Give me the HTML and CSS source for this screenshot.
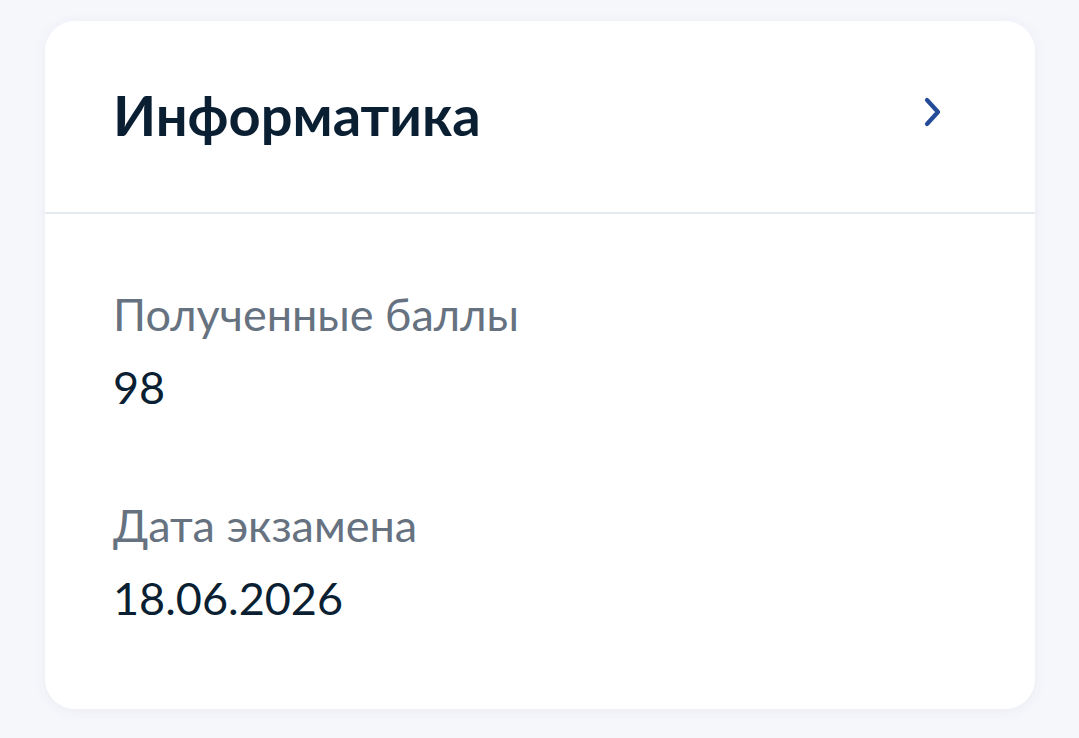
FILE: index.html
```html
<!DOCTYPE html>
<html lang="ru">
<head>
    <meta charset="UTF-8">
    <meta name="viewport" content="width=device-width, initial-scale=1.0">
    <title>Результаты экзаменов</title>
    <link rel="stylesheet" href="styles.css">
</head>
<body>
    <div class="exam-card">
        <a class="exam-header" href="#">
            <h2 class="exam-title">Информатика</h2>
            <svg class="chevron" width="20" height="30" viewBox="0 0 20 30" aria-hidden="true">
                <path d="M4 3 L15 15 L4 27" fill="none" stroke="currentColor" stroke-width="4.2" stroke-linecap="round" stroke-linejoin="round"/>
            </svg>
        </a>

        <div class="exam-body">
            <div class="field">
                <div class="field-label">Полученные баллы</div>
                <div class="field-value">98</div>
            </div>
            <div class="field">
                <div class="field-label">Дата экзамена</div>
                <div class="field-value">18.06.2026</div>
            </div>
        </div>
    </div>
</body>
</html>
```

FILE: styles.css
```css
* {
    margin: 0;
    padding: 0;
    box-sizing: border-box;
}

body {
    font-family: Lato, 'Noto Sans', sans-serif;
    background: #f6f7fb;
    min-height: 100vh;
    padding: 21px 44px 29px 45px;
    color: #0b1f33;
}

.exam-card {
    background: #ffffff;
    border-radius: 30px;
    box-shadow: 0 2px 14px rgba(40, 60, 130, 0.06);
    overflow: hidden;
}

.exam-header {
    display: flex;
    align-items: center;
    justify-content: space-between;
    height: 193px;
    padding: 0 92px 0 68px;
    border-bottom: 2px solid #e3ebf0;
    color: inherit;
    text-decoration: none;
}

.exam-title {
    font-size: 56px;
    font-weight: 700;
    margin-top: -4px;
}

.chevron {
    color: #234b97;
    margin-top: -10px;
}

.exam-body {
    padding: 73px 70px 84px 68px;
    display: flex;
    flex-direction: column;
    gap: 84px;
}

.field-label {
    font-size: 45px;
    line-height: 54px;
    color: #66727f;
}

.field-value {
    font-size: 45px;
    line-height: 54px;
    margin-top: 19px;
}
```
